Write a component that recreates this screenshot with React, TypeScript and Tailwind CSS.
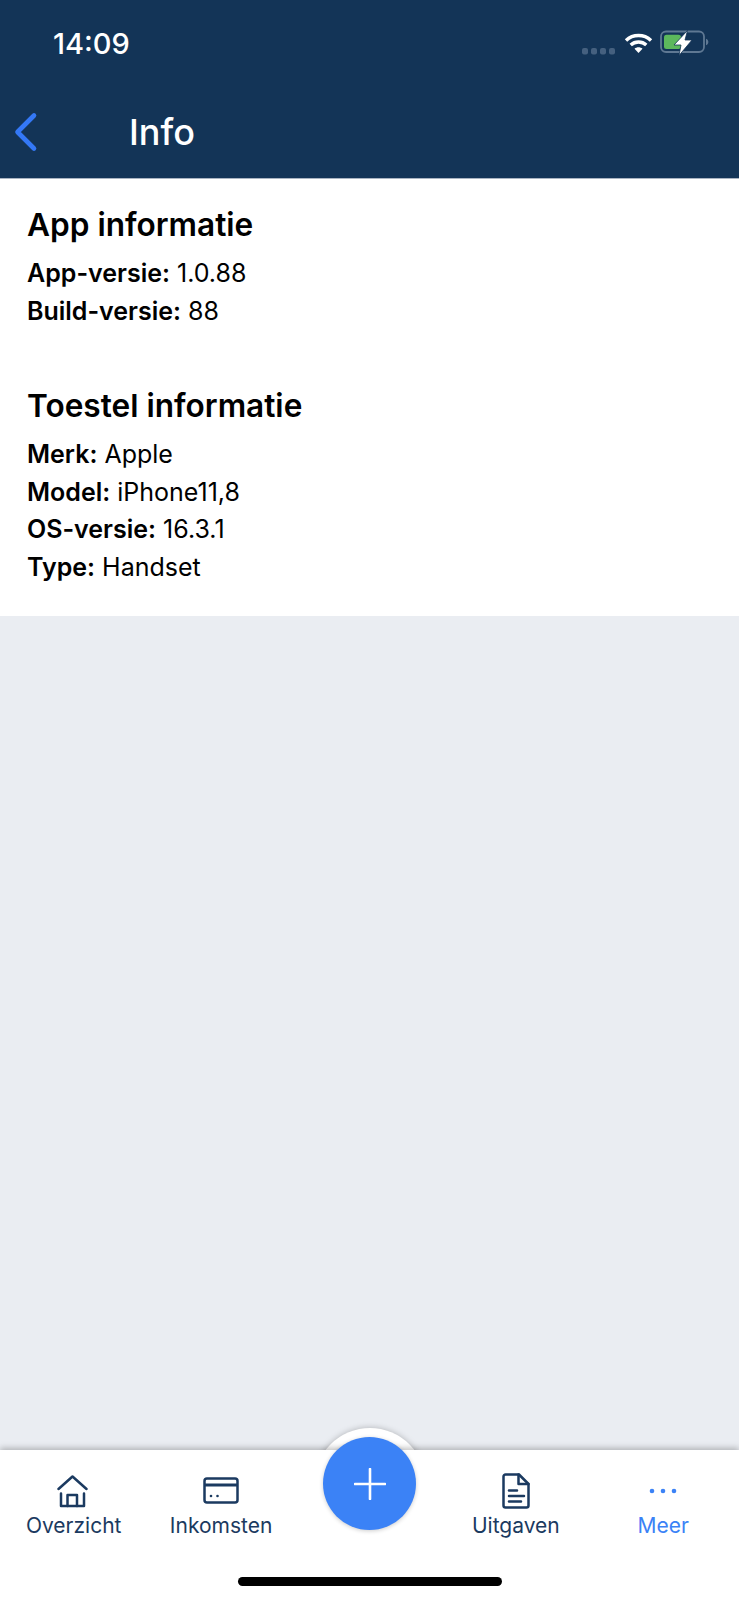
const fontStack = { fontFamily: 'Inter, "Noto Sans", sans-serif' };

function Row({ label, value }: { label: string; value: string }) {
  return (
    <p className="text-[25px] leading-[37.5px] text-black">
      <span className="font-semibold">{label}</span> {value}
    </p>
  );
}

function HomeIcon() {
  return (
    <svg width="32" height="34" viewBox="0 0 32 34" fill="none" stroke="#1b3a60" strokeWidth="2.5" strokeLinecap="round" strokeLinejoin="round" className="-ml-[2px]">
      <path d="M1.5 15 15.5 2.5 29.5 15" />
      <path d="M4 19.5V32h23V19.5" />
      <path d="M10.5 32V21h9.5v11" />
    </svg>
  );
}

function CardIcon() {
  return (
    <svg width="36" height="34" viewBox="0 0 36 34" fill="none" stroke="#1b3a60" strokeWidth="2.5" strokeLinejoin="round">
      <rect x="1.5" y="4.5" width="33" height="24" rx="2.5" />
      <path d="M1.5 11h33" strokeWidth="3" />
      <circle cx="8" cy="22" r="1.3" fill="#1b3a60" stroke="none" />
      <circle cx="14.5" cy="22" r="1.3" fill="#1b3a60" stroke="none" />
    </svg>
  );
}

function DocIcon() {
  return (
    <svg width="28" height="36" viewBox="0 0 28 36" fill="none" stroke="#1b3a60" strokeWidth="2.5" strokeLinecap="round" strokeLinejoin="round">
      <path d="M3.5 1.5h13.5L26.5 11v21.5a2 2 0 0 1-2 2h-21a2 2 0 0 1-2-2v-29a2 2 0 0 1 2-2z" />
      <path d="M16.5 1.5V11h10" />
      <path d="M7 17.5h8" />
      <path d="M7 23h15" />
      <path d="M7 28.5h12" />
    </svg>
  );
}

function DotsIcon() {
  return (
    <svg width="28" height="34" viewBox="0 0 28 34" fill="#3b82f6">
      <circle cx="3" cy="17" r="2.3" />
      <circle cx="14" cy="17" r="2.3" />
      <circle cx="25" cy="17" r="2.3" />
    </svg>
  );
}

function StatusIcons() {
  return (
    <div className="flex items-center mt-[6px]">
      <svg width="36" height="10" viewBox="0 0 36 10" fill="#45607f" className="mt-[15px]">
        <rect x="1" y="2" width="6" height="6.5" rx="2" />
        <rect x="10" y="2" width="6" height="6.5" rx="2" />
        <rect x="19" y="2" width="6" height="6.5" rx="2" />
        <rect x="28" y="2" width="6" height="6.5" rx="2" />
      </svg>
      <svg width="29" height="22" viewBox="0 0 29 22" fill="none" stroke="#fff" strokeWidth="3.4" className="ml-[7px]">
        <path d="M2 8.5c7-6.6 18-6.6 25 0" />
        <path d="M6.7 13c4.4-4 11.2-4 15.6 0" />
        <path d="M14.5 21l-4-4.3c2.2-2 5.8-2 8 0z" fill="#fff" stroke="none" />
      </svg>
      <svg width="50" height="26" viewBox="0 0 50 26" fill="none" className="ml-[7px]">
        <rect x="1" y="1.5" width="43" height="20.5" rx="5" stroke="#5f7893" strokeWidth="1.8" />
        <path d="M46 8.7c1.6.5 2.3 1.700 2.3 3.300s-.7 2.800-2.300 3.300z" fill="#5f7893" />
        <rect x="4" y="4.7" width="17" height="14.3" rx="2.5" fill="#5cb85c" />
        <path d="M27.5 0.5 14 15h7L19 25.5 32 10h-7z" fill="#fff" stroke="#133457" strokeWidth="0.8" />
      </svg>
    </div>
  );
}

function Tab({ label, icon, active }: { label: string; icon: React.ReactNode; active?: boolean }) {
  return (
    <div className="flex flex-col items-center">
      <div className="h-[36px] flex items-center justify-center">{icon}</div>
      <span className={`text-[21px] leading-[28px] mt-[3px] ${active ? 'text-[#3b82f6]' : 'text-[#1b3a60]'}`}>{label}</span>
    </div>
  );
}

export default function App() {
  return (
    <div className="relative w-[739px] h-[1600px] flex flex-col overflow-hidden bg-[#eaedf2]" style={fontStack}>
      <header className="h-[179px] shrink-0 bg-[#133457] border-b border-[#aab4c2] flex flex-col">
        <div className="h-[88px] pl-[53px] pr-[29px] pt-[24px] flex items-start justify-between">
          <span className="text-[29px] leading-[40px] font-medium text-white">14:09</span>
          <StatusIcons />
        </div>
        <div className="flex items-center h-[88px]">
          <svg width="26" height="40" viewBox="0 0 26 40" fill="none" stroke="#3478f6" strokeWidth="4.6" strokeLinecap="round" strokeLinejoin="round" className="ml-[13px]">
            <path d="M21 3.5 4.5 20 21 36.5" />
          </svg>
          <h1 className="ml-[90px] text-[36px] leading-[48px] font-medium text-white">Info</h1>
        </div>
      </header>

      <main className="bg-white h-[437px] shrink-0 px-[27px] pt-[24px]">
        <section>
          <h2 className="text-[31.6px] leading-[44px] font-semibold text-black mb-[8px]">App informatie</h2>
          <Row label="App-versie:" value="1.0.88" />
          <Row label="Build-versie:" value="88" />
        </section>
        <section className="mt-[54px]">
          <h2 className="text-[31.6px] leading-[44px] font-semibold text-black mb-[8px]">Toestel informatie</h2>
          <Row label="Merk:" value="Apple" />
          <Row label="Model:" value="iPhone11,8" />
          <Row label="OS-versie:" value="16.3.1" />
          <Row label="Type:" value="Handset" />
        </section>
      </main>

      <div className="flex-1" />

      {/* ring sits behind the bar, only the top arc shows */}
      <div className="absolute left-[313.5px] top-[1428px] w-[112px] h-[112px] rounded-full bg-white shadow-[0_0_6px_rgba(0,0,0,0.25)]" />

      <nav className="relative h-[150px] shrink-0 bg-white shadow-[0_-2px_6px_rgba(0,0,0,0.25)] flex flex-col">
        <div className="grid grid-cols-5 pt-[23px] pr-[2px]">
          <Tab label="Overzicht" icon={<HomeIcon />} />
          <Tab label="Inkomsten" icon={<CardIcon />} />
          <div />
          <Tab label="Uitgaven" icon={<DocIcon />} />
          <Tab label="Meer" icon={<DotsIcon />} active />
        </div>
        <div className="mt-auto mb-[14px] mx-auto w-[264px] h-[9px] rounded-full bg-black" />
        <button className="absolute left-[323px] top-[-13px] w-[93px] h-[93px] rounded-full bg-[#3b82f6] shadow-[0_1px_4px_rgba(0,0,0,0.2)] flex items-center justify-center">
          <svg width="32" height="32" viewBox="0 0 32 32" stroke="#fff" strokeWidth="2.6" strokeLinecap="round">
            <path d="M16 1v30M1 16h30" />
          </svg>
        </button>
      </nav>
    </div>
  );
}
